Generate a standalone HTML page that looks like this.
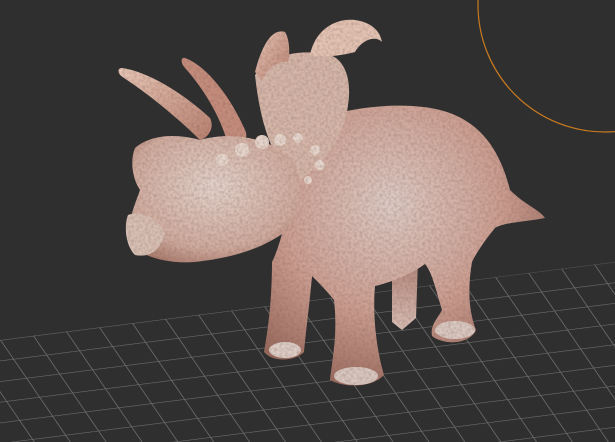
<!DOCTYPE html>
<html><head><style>
html,body{margin:0;padding:0;background:#2f2f2f;}
svg{display:block}
</style></head><body>
<svg width="615" height="442" viewBox="0 0 615 442" xmlns="http://www.w3.org/2000/svg">
<defs>
<pattern id="g" width="1" height="1" patternUnits="userSpaceOnUse" patternTransform="matrix(33,-4.2,13,19,0,340)">
<path d="M0 0H1M0 0V1" stroke="#727272" stroke-width="0.05" fill="none"/>
</pattern>
<radialGradient id="skin" cx="0.45" cy="0.35" r="0.7">
<stop offset="0" stop-color="#dccbc5"/><stop offset="0.55" stop-color="#cc9f92"/><stop offset="1" stop-color="#96665a"/>
</radialGradient>
<radialGradient id="head" cx="0.5" cy="0.4" r="0.7">
<stop offset="0" stop-color="#e2d2cb"/><stop offset="0.7" stop-color="#cfab9e"/><stop offset="1" stop-color="#a07062"/>
</radialGradient>
<linearGradient id="horn" x1="0" y1="0" x2="1" y2="1">
<stop offset="0" stop-color="#e8c8b8"/><stop offset="1" stop-color="#b88070"/>
</linearGradient>
<linearGradient id="leg" x1="0" y1="0" x2="0" y2="1">
<stop offset="0" stop-color="#b08074"/><stop offset="1" stop-color="#d8c0b6"/>
</linearGradient>
<filter id="tex" x="0" y="0" width="100%" height="100%">
<feTurbulence type="fractalNoise" baseFrequency="0.35" numOctaves="2" seed="3"/>
<feColorMatrix type="matrix" values="0 0 0 0 0.2  0 0 0 0 0.1  0 0 0 0 0.08  0 0 0 -1.6 1.05"/>
<feComposite in2="SourceGraphic" operator="in"/>
</filter>
</defs>
<rect width="615" height="442" fill="#2f2f2f"/>
<path d="M0 340 L615 262 L615 442 L0 442Z" fill="url(#g)"/>
<circle cx="605" cy="5" r="127" fill="none" stroke="#c87a1e" stroke-width="1.2"/>
<g id="dino">
<path d="M392 258 L418 260 L416 318 L402 330 L392 322Z" fill="url(#leg)"/>
<path d="M300 125 C340 108 400 100 440 110 C480 120 500 150 510 190 C525 205 540 210 545 218 C525 222 505 222 495 228 C485 240 475 255 472 262 C468 285 468 310 476 330 C470 344 445 346 432 336 C430 325 438 318 442 310 C436 290 432 272 425 264 C410 275 392 282 375 286 C372 320 378 355 384 375 C372 388 345 388 330 380 C332 360 338 335 334 300 C326 290 318 282 312 276 C310 300 306 330 304 352 C294 362 272 362 264 352 C268 330 272 300 272 262 C288 230 290 180 300 125Z" fill="url(#skin)"/>
<path d="M255 75 C270 55 300 48 330 55 C345 60 352 80 348 105 C345 130 330 160 300 180 C280 170 262 140 255 75Z" fill="#d4b6a9"/>
<path d="M255 72 C262 45 272 28 285 32 C290 40 290 55 288 62 C278 60 268 68 262 80Z" fill="url(#horn)"/>
<path d="M310 55 C315 30 335 18 355 20 C370 22 380 30 382 42 C375 35 362 40 355 52 C345 55 325 58 310 55Z" fill="#e3c4b4"/>
<path d="M122 68 C150 72 185 95 210 118 C215 128 208 138 200 140 C180 120 150 95 124 78 C117 74 117 68 122 68Z" fill="url(#horn)"/>
<path d="M185 58 C205 65 230 95 245 130 C250 140 240 148 228 145 C222 120 205 90 185 68 C180 62 181 57 185 58Z" fill="#c48c7c"/>
<path d="M135 148 C150 135 175 133 200 140 C235 130 280 140 295 165 C305 190 300 215 285 232 C260 250 230 258 195 262 C170 264 145 258 130 245 C125 225 135 205 140 190 C132 178 130 160 135 148Z" fill="url(#head)"/>
<path d="M128 215 C140 210 160 218 165 235 C160 250 150 258 135 255 C125 245 124 225 128 215Z" fill="#d8c0b5"/>
<g fill="#e6d6cd">
<circle cx="222" cy="160" r="6"/><circle cx="242" cy="150" r="7"/><circle cx="262" cy="142" r="7"/><circle cx="280" cy="140" r="6"/><circle cx="298" cy="138" r="5"/><circle cx="315" cy="150" r="5"/><circle cx="320" cy="165" r="5"/><circle cx="308" cy="180" r="4"/>
</g>
<ellipse cx="285" cy="350" rx="16" ry="8" fill="#dccdc6"/>
<ellipse cx="356" cy="376" rx="22" ry="9" fill="#d8c8c1"/>
<ellipse cx="455" cy="330" rx="20" ry="9" fill="#d8c8c1"/>
</g>
<use href="#dino" filter="url(#tex)" opacity="0.35"/>
</svg>
</body></html>
